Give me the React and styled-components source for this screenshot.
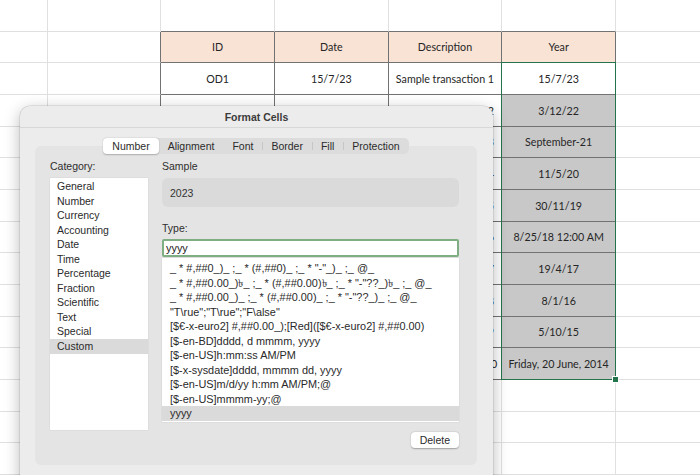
import React from 'react';
import styled, { createGlobalStyle } from 'styled-components';

const GlobalStyle = createGlobalStyle`
  html, body { margin: 0; padding: 0; background: #fff; overflow: hidden; }
  #root { width: 700px; height: 475px; }
`;

const Screen = styled.div`
  position: relative;
  width: 700px;
  height: 475px;
  overflow: hidden;
  background: #fff;
`;

/* ---------- Spreadsheet ---------- */

const Sheet = styled.div`
  display: grid;
  grid-template-columns: 47.67px repeat(6, 113.67px);
  grid-template-rows: repeat(15, 31.67px);
  font-family: Lato, "Liberation Sans", sans-serif;
  font-size: 10.7px;
  color: #262626;
`;

const Cell = styled.div`
  box-sizing: border-box;
  grid-row: ${(p) => p.$row};
  grid-column: ${(p) => p.$col};
  display: flex;
  align-items: center;
  justify-content: center;
  white-space: nowrap;
  background: ${(p) => p.$bg || '#fff'};
  border-right: 1px solid ${(p) => (p.$dr ? '#727272' : '#e0e0e0')};
  border-bottom: 1px solid ${(p) => (p.$db ? '#727272' : '#e0e0e0')};
`;

const Selection = styled.div`
  grid-row: 3 / 13;
  grid-column: 6 / 7;
  position: relative;
  z-index: 1;
  margin: -1px 0 0 -1px;
  border: 1.5px solid #23744a;
  pointer-events: none;

  &::after {
    content: '';
    position: absolute;
    right: -4px;
    bottom: -4px;
    width: 5px;
    height: 5px;
    background: #23744a;
    border: 1px solid #fff;
  }
`;

/* ---------- Dialog ---------- */

const Dialog = styled.div`
  position: absolute;
  left: 20px;
  top: 106px;
  width: 473px;
  height: 400px;
  display: flex;
  flex-direction: column;
  background: #ececec;
  border-radius: 10px 10px 0 0;
  box-shadow: 0 0 0 0.5px rgba(0, 0, 0, 0.15), 0 4px 16px rgba(0, 0, 0, 0.28);
  font-family: "Liberation Sans", Arial, "DejaVu Sans", "Noto Sans", sans-serif;
  font-size: 10.5px;
  color: #262626;
  z-index: 2;
`;

const TitleBar = styled.div`
  box-sizing: border-box;
  height: 22px;
  display: flex;
  align-items: center;
  justify-content: center;
  font-weight: bold;
  color: #3b3b3b;
  border-bottom: 1px solid #d8d8d8;
`;

const Body = styled.div`
  display: flex;
  flex-direction: column;
  padding: 10px 16px 0 15px;
`;

const Tabs = styled.div`
  align-self: center;
  position: relative;
  z-index: 1;
  display: flex;
  align-items: center;
  height: 16px;
  border-radius: 5px;
  background: #dcdcdc;
`;

const Tab = styled.div`
  position: relative;
  height: 16px;
  line-height: 16px;
  padding: 0 9px;
  border-radius: 4px;
  color: #2b2b2b;
  background: ${(p) => (p.$active ? '#fff' : 'transparent')};
  box-shadow: ${(p) => (p.$active ? '0 0.5px 1.5px rgba(0,0,0,0.25)' : 'none')};

  & + &::before {
    content: '';
    position: absolute;
    left: 0;
    top: 4px;
    height: 8px;
    width: 1px;
    background: ${(p) => (p.$afterActive ? 'transparent' : '#c6c6c6')};
  }
`;

const Panel = styled.div`
  margin-top: -8px;
  height: 319px;
  box-sizing: border-box;
  padding: 13px 18px 0 15px;
  background: #e4e4e4;
  border-radius: 6px;
  display: flex;
  gap: 14px;
`;

const Column = styled.div`
  display: flex;
  flex-direction: column;
  width: ${(p) => p.$w}px;
`;

const Label = styled.div`
  height: 14px;
  line-height: 14px;
  color: #2e2e2e;
  margin-top: ${(p) => p.$mt || 0}px;
`;

const ListBox = styled.div`
  margin-top: ${(p) => p.$mt || 0}px;
  height: ${(p) => p.$h}px;
  box-sizing: border-box;
  padding-top: ${(p) => p.$pt || 0}px;
  background: #fff;
  overflow: hidden;
  font-size: ${(p) => p.$fs || 10.5}px;
  box-shadow: 0 0 0 0.5px rgba(0, 0, 0, 0.06);
`;

const ListItem = styled.div`
  height: ${(p) => p.$rh}px;
  line-height: ${(p) => p.$rh}px;
  padding-left: ${(p) => p.$pl}px;
  white-space: nowrap;
  color: #2a2a2a;
  background: ${(p) => (p.$selected ? '#dadada' : 'transparent')};
`;

const SampleBox = styled.div`
  margin-top: 5px;
  height: 29px;
  box-sizing: border-box;
  padding-left: 8px;
  display: flex;
  align-items: center;
  background: #dadada;
  border-radius: 6px;
  color: #333;
`;

const TypeInput = styled.div`
  margin-top: 4px;
  height: 18px;
  box-sizing: border-box;
  padding-left: 2px;
  display: flex;
  align-items: center;
  background: #fff;
  border: 2px solid #7fae82;
  border-radius: 2px;
  color: #222;
  font-size: 10.9px;
`;

const Button = styled.div`
  align-self: flex-end;
  margin-top: 10px;
  height: 16px;
  line-height: 16px;
  padding: 0 9px;
  background: #fff;
  border-radius: 4px;
  box-shadow: 0 0.5px 1.5px rgba(0, 0, 0, 0.3);
  color: #2b2b2b;
`;

/* ---------- Data ---------- */

const dates = [
  '15/7/23',
  '3/12/22',
  'September-21',
  '11/5/20',
  '30/11/19',
  '8/25/18 12:00 AM',
  '19/4/17',
  '8/1/16',
  '5/10/15',
  'Friday, 20 June, 2014',
];

const headers = ['ID', 'Date', 'Description', 'Year'];

const categories = [
  'General', 'Number', 'Currency', 'Accounting', 'Date', 'Time',
  'Percentage', 'Fraction', 'Scientific', 'Text', 'Special', 'Custom',
];

const formats = [
  '_ * #,##0_)_ ;_ * (#,##0)_ ;_ * "-"_)_ ;_ @_',
  '_ * #,##0.00_)৳_ ;_ * (#,##0.00)৳_ ;_ * "-"??_)৳_ ;_ @_',
  '_ * #,##0.00_)_ ;_ * (#,##0.00)_ ;_ * "-"??_)_ ;_ @_',
  '"T\\rue";"T\\rue";"F\\alse"',
  '[$€-x-euro2] #,##0.00_);[Red]([$€-x-euro2] #,##0.00)',
  '[$-en-BD]dddd, d mmmm, yyyy',
  '[$-en-US]h:mm:ss AM/PM',
  '[$-x-sysdate]dddd, mmmm dd, yyyy',
  '[$-en-US]m/d/yy h:mm AM/PM;@',
  '[$-en-US]mmmm-yy;@',
  'yyyy',
];

const tabs = ['Number', 'Alignment', 'Font', 'Border', 'Fill', 'Protection'];

function buildCells() {
  const cells = [];
  for (let r = 0; r < 15; r++) {
    for (let c = 0; c < 7; c++) {
      const inTableCol = c >= 2 && c <= 5;
      const inTableRow = r >= 1 && r <= 11;
      const props = { $row: r + 1, $col: c + 1, key: `${r}-${c}` };
      let text = '';
      if (r === 0 && inTableCol) props.$db = true;
      if (inTableRow && c === 1) props.$dr = true;
      if (inTableRow && inTableCol) {
        props.$dr = true;
        props.$db = true;
        if (r === 1) {
          props.$bg = '#f8e3d5';
          text = headers[c - 2];
        } else {
          const i = r - 2;
          if (c === 2) text = `OD${i + 1}`;
          if (c === 3) text = dates[i];
          if (c === 4) text = `Sample transaction ${i + 1}`;
          if (c === 5) {
            text = dates[i];
            if (i > 0) props.$bg = '#c8c8c8';
          }
        }
      }
      cells.push(<Cell {...props}>{text}</Cell>);
    }
  }
  return cells;
}

export default function App() {
  const activeTab = 0;
  return (
    <Screen>
      <GlobalStyle />
      <Sheet>
        {buildCells()}
        <Selection />
      </Sheet>

      <Dialog>
        <TitleBar>Format Cells</TitleBar>
        <Body>
          <Tabs>
            {tabs.map((t, i) => (
              <Tab key={t} $active={i === activeTab} $afterActive={i === activeTab + 1}>
                {t}
              </Tab>
            ))}
          </Tabs>
          <Panel>
            <Column $w={98}>
              <Label>Category:</Label>
              <ListBox $mt={5} $h={252} $pt={1}>
                {categories.map((c) => (
                  <ListItem key={c} $rh={14.55} $pl={7} $selected={c === 'Custom'}>
                    {c}
                  </ListItem>
                ))}
              </ListBox>
            </Column>
            <Column $w={297}>
              <Label>Sample</Label>
              <SampleBox>2023</SampleBox>
              <Label $mt={14}>Type:</Label>
              <TypeInput>yyyy</TypeInput>
              <ListBox $mt={1} $h={163.5} $pt={3} $fs={10.9}>
                {formats.map((f, i) => (
                  <ListItem key={i} $rh={14.5} $pl={8} $selected={i === formats.length - 1}>
                    {f}
                  </ListItem>
                ))}
              </ListBox>
              <Button>Delete</Button>
            </Column>
          </Panel>
        </Body>
      </Dialog>
    </Screen>
  );
}
